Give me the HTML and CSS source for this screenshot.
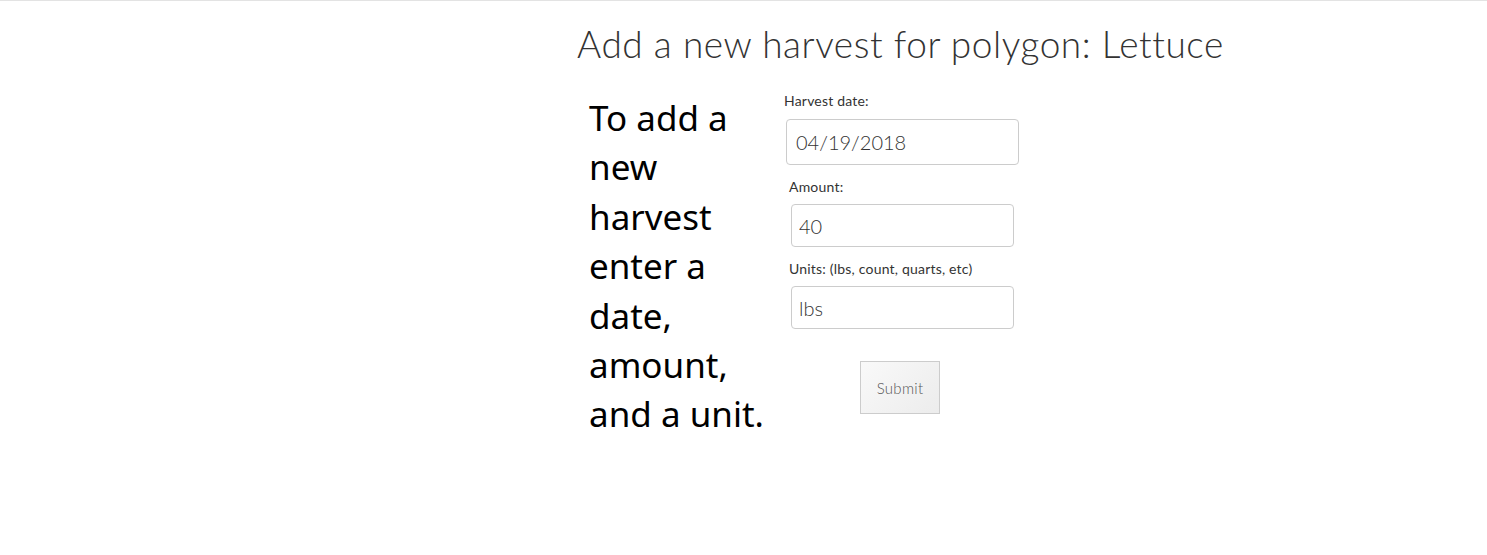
FILE: index.html
```html
<!DOCTYPE html>
<html>
<head>
<meta charset="utf-8">
<link rel="stylesheet" href="styles.css">
</head>
<body>
<div class="topline"></div>
<main class="page">
  <h1 class="title">Add a new harvest for polygon: Lettuce</h1>
  <div class="row">
    <p class="intro">To add a new harvest enter a date, amount, and a unit.</p>
    <form class="form">
      <label class="lbl lbl-date">Harvest date:</label>
      <input class="field field-date" type="text" value="04/19/2018">
      <label class="lbl lbl-in">Amount:</label>
      <input class="field field-in" type="text" value="40">
      <label class="lbl lbl-in">Units: (lbs, count, quarts, etc)</label>
      <input class="field field-in" type="text" value="lbs">
      <button class="submit" type="button">Submit</button>
    </form>
  </div>
</main>
</body>
</html>
```

FILE: styles.css
```css
html, body { margin: 0; padding: 0; background: #fff; }
.topline { height: 1px; background: #e3e3e3; }
.page { padding-left: 577px; }
.title {
  margin: 21px 0 0 0;
  font-family: "Lato", sans-serif;
  font-weight: 300;
  font-size: 37px;
  line-height: 44px;
  color: #333;
  letter-spacing: 0.55px;
}
.row { display: flex; align-items: flex-start; margin-top: 27px; }
.intro {
  margin: 0 0 0 12px;
  width: 184px;
  flex: none;
  font-family: "Noto Sans", sans-serif;
  font-size: 35px;
  line-height: 49.4px;
  color: #000;
}
.form { display: flex; flex-direction: column; align-items: flex-start; margin-left: 11px; }
.lbl {
  font-family: "Lato", sans-serif;
  font-size: 14px;
  line-height: 16px;
  letter-spacing: 0.2px;
  color: #333;
}
.lbl-in { margin-left: 5px; margin-top: 14px; }
.field {
  box-sizing: border-box;
  border: 1px solid #ccc;
  border-radius: 4px;
  font-family: "Lato", sans-serif;
  font-weight: 300;
  font-size: 20px;
  color: #333;
  padding: 0 9px;
  margin-top: 10px;
  outline: none;
}
.field-date { width: 233px; height: 46px; margin-left: 2px; }
.field-in { width: 223px; height: 43px; margin-left: 7px; padding: 0 7px; margin-top: 9px; }
.submit {
  margin: 32px 0 0 76px;
  width: 80px;
  height: 53px;
  border: 1px solid #ccc;
  background: linear-gradient(135deg, #f9f9f9, #ececec);
  font-family: "Lato", sans-serif;
  font-weight: 300;
  font-size: 15px;
  letter-spacing: 0.3px;
  color: #555;
  padding: 0;
}
```
